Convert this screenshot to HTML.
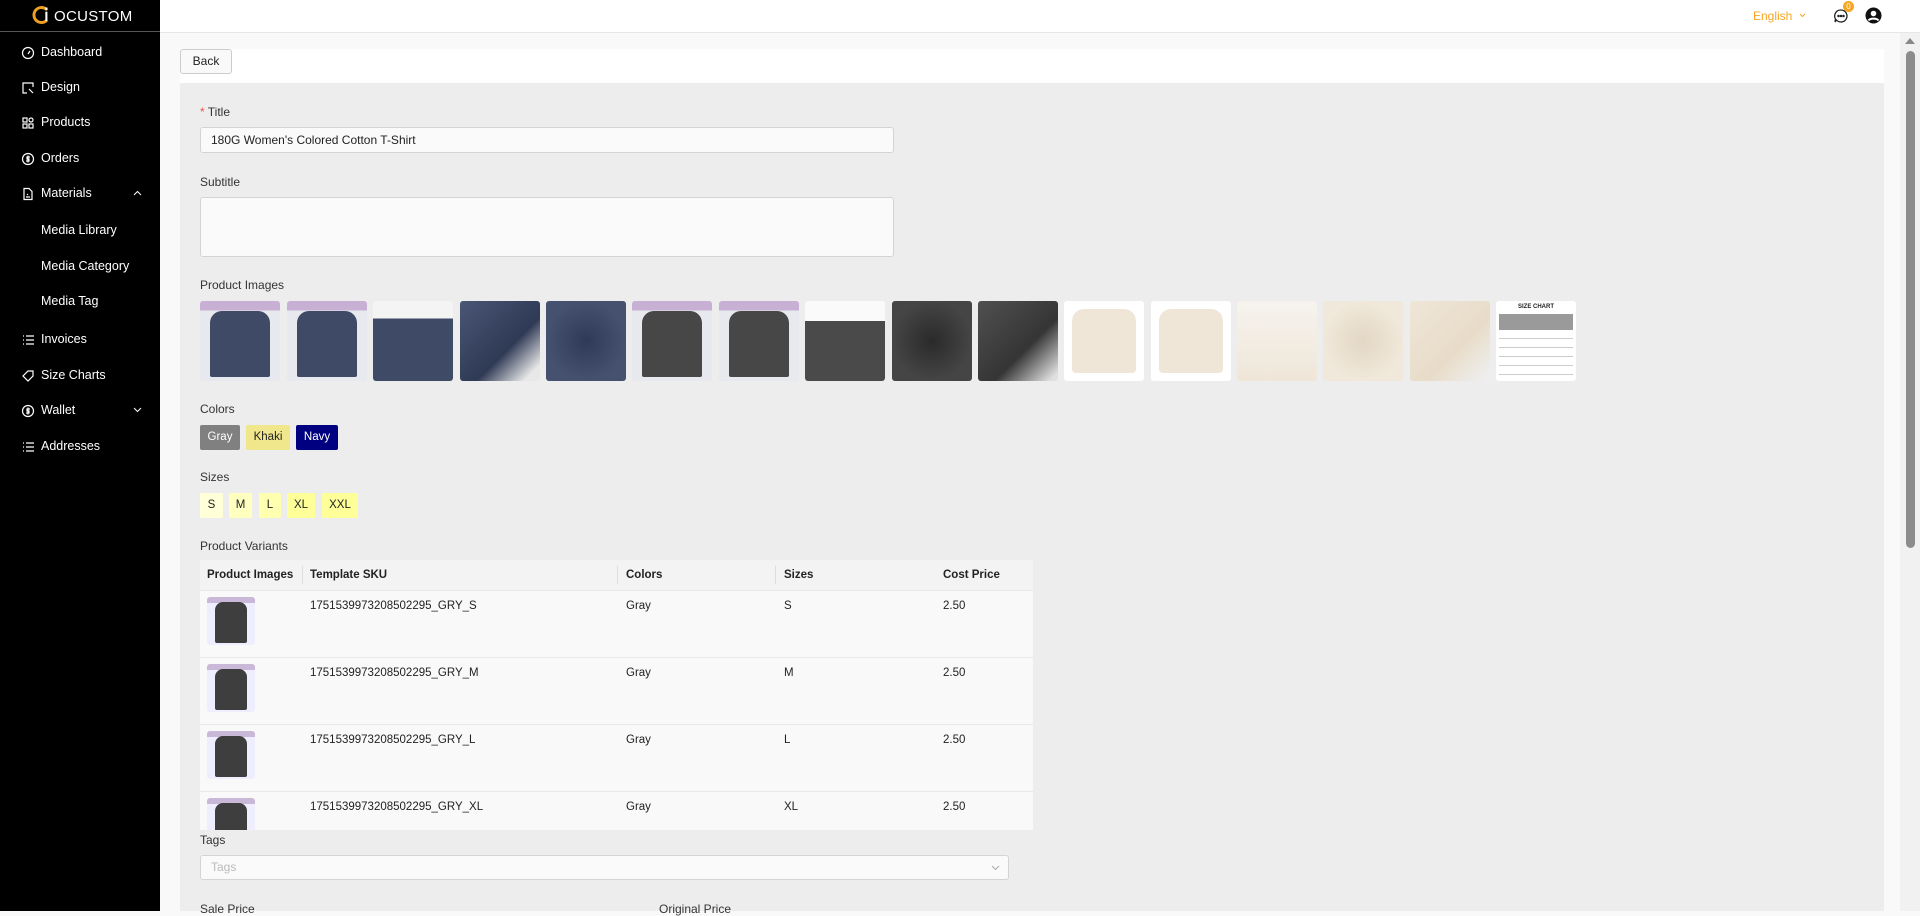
<!DOCTYPE html>
<html><head><meta charset="utf-8"><style>
*{box-sizing:border-box;margin:0;padding:0}
body{width:1920px;height:911px;overflow:hidden;background:#f9f9f9;font-family:"Liberation Sans",sans-serif;font-size:12px;color:#222;position:relative}
.abs{position:absolute}
#side{left:0;top:0;width:160px;height:911px;background:#000;color:#fff}
#side .logo{left:0;top:0;width:160px;height:32px;border-bottom:1px solid #555}
.nav{position:absolute;left:0;font-size:12.5px;color:#fff;display:flex;align-items:center}
.nav svg{position:absolute;left:21px;top:-6px}
.nav span{position:absolute;left:41px;top:-7px;white-space:nowrap}
#top{left:160px;top:0;width:1760px;height:33px;background:#fff;border-bottom:1px solid #e6e6e6}
.lbl{position:absolute;left:200px;font-size:12px;color:#333}
.img{position:absolute;top:301px;width:80px;height:80px;border-radius:3px;overflow:hidden}
.chip{position:absolute;height:25px;line-height:25px;text-align:center;border-radius:2px;font-size:11.5px}
.row{position:absolute;left:200px;width:833px;height:67px;background:#f9f9f9;border-top:1px solid #e8e8e8;font-size:11.5px}
.row div{position:absolute;top:9px}
.thumb{position:absolute;left:7px;top:6px;width:48px;height:48px;border-radius:3px;background:linear-gradient(#c9b8d8 0 12%,#eef 12%);overflow:hidden}
.thumb i{position:absolute;left:8px;top:5px;width:32px;height:41px;background:#3e3e3e;border-radius:8px 8px 2px 2px}
</style></head><body>
<div id="side" class="abs">
 <div class="logo abs">
  <svg class="abs" style="left:32px;top:5px" width="20" height="20" viewBox="0 0 24 24"><path d="M17 5 A9 9 0 1 0 17 19" stroke="#f0a020" stroke-width="3.5" fill="none" stroke-linecap="round"/><rect x="16" y="3" width="2.5" height="3" fill="#fff"/><rect x="16" y="8" width="2.5" height="11" fill="#fff"/></svg>
  <div class="abs" style="left:54px;top:8px;font-size:15px;color:#fff;letter-spacing:0.3px">OCUSTOM</div>
 </div>
 <div class="nav" style="top:52px"><svg width="14" height="14" viewBox="0 0 14 14" fill="none" stroke="#fff" stroke-width="1.2"><circle cx="7" cy="7" r="5.5"/><path d="M7 8 L9 5"/></svg><span>Dashboard</span></div>
 <div class="nav" style="top:87px"><svg width="14" height="14" viewBox="0 0 14 14" fill="none" stroke="#fff" stroke-width="1.2"><path d="M12 6V2H2v10h4"/><path d="M8 8l4 4"/></svg><span>Design</span></div>
 <div class="nav" style="top:122px"><svg width="14" height="14" viewBox="0 0 14 14" fill="none" stroke="#fff" stroke-width="1.2"><rect x="2" y="2" width="4" height="4"/><circle cx="10" cy="4" r="2"/><rect x="2" y="8" width="4" height="4"/><rect x="8" y="8" width="4" height="4"/></svg><span>Products</span></div>
 <div class="nav" style="top:158px"><svg width="14" height="14" viewBox="0 0 14 14" fill="none" stroke="#fff" stroke-width="1.2"><circle cx="7" cy="7" r="5.5"/><path d="M9 5H6v2h2v2H5M7 3.5v7"/></svg><span>Orders</span></div>
 <div class="nav" style="top:193px"><svg width="14" height="14" viewBox="0 0 14 14" fill="none" stroke="#fff" stroke-width="1.2"><path d="M3 1.5h5l3 3v8H3z"/><path d="M5 10h4M6 7l1 1"/></svg><span>Materials</span><svg style="left:133px;top:-3px" width="9" height="6" viewBox="0 0 9 6" fill="none" stroke="#fff"><path d="M1 5l3.5-3.5L8 5"/></svg></div>
 <div class="nav" style="top:230px"><span>Media Library</span></div>
 <div class="nav" style="top:266px"><span>Media Category</span></div>
 <div class="nav" style="top:301px"><span>Media Tag</span></div>
 <div class="nav" style="top:339px"><svg width="14" height="14" viewBox="0 0 14 14" fill="none" stroke="#fff" stroke-width="1.2"><path d="M2 3h1M5 3h8M2 7h1M5 7h8M2 11h1M5 11h8"/></svg><span>Invoices</span></div>
 <div class="nav" style="top:375px"><svg width="14" height="14" viewBox="0 0 14 14" fill="none" stroke="#fff" stroke-width="1.2"><path d="M7 2h5v5l-5 5-5-5z"/></svg><span>Size Charts</span></div>
 <div class="nav" style="top:410px"><svg width="14" height="14" viewBox="0 0 14 14" fill="none" stroke="#fff" stroke-width="1.2"><circle cx="7" cy="7" r="5.5"/><path d="M9 5H6v2h2v2H5M7 3.5v7"/></svg><span>Wallet</span><svg style="left:133px;top:-3px" width="9" height="6" viewBox="0 0 9 6" fill="none" stroke="#fff"><path d="M1 1l3.5 3.5L8 1"/></svg></div>
 <div class="nav" style="top:446px"><svg width="14" height="14" viewBox="0 0 14 14" fill="none" stroke="#fff" stroke-width="1.2"><path d="M2 3h1M5 3h8M2 7h1M5 7h8M2 11h1M5 11h8"/></svg><span>Addresses</span></div>
</div>
<div id="top" class="abs">
 <div class="abs" style="left:1593px;top:9px;color:#f5a623;font-size:12px">English</div>
 <svg class="abs" style="left:1639px;top:13px" width="7" height="5" viewBox="0 0 7 5" fill="none" stroke="#f5a623"><path d="M1 1l2.5 2.5L6 1"/></svg>
 <svg class="abs" style="left:1673px;top:8px" width="16" height="16" viewBox="0 0 16 16" fill="none" stroke="#222" stroke-width="1.3"><path d="M8 2a6 6 0 1 1-4.5 10L2 14l.5-3A6 6 0 0 1 8 2z"/><circle cx="5.5" cy="8" r=".6" fill="#222"/><circle cx="8" cy="8" r=".6" fill="#222"/><circle cx="10.5" cy="8" r=".6" fill="#222"/></svg>
 <div class="abs" style="left:1683px;top:1px;width:11px;height:11px;border-radius:50%;background:#f5a623;color:#fff;font-size:8px;text-align:center;line-height:11px">0</div>
 <svg class="abs" style="left:1705px;top:7px" width="17" height="17" viewBox="0 0 17 17"><circle cx="8.5" cy="8.5" r="8" fill="#111"/><circle cx="8.5" cy="6.5" r="2.8" fill="#fff"/><path d="M3.5 13.5c1.5-2.5 8.5-2.5 10 0" stroke="#fff" stroke-width="2" fill="none"/></svg>
</div>
<div class="abs" style="left:1900px;top:33px;width:20px;height:878px;background:#f1f1f1"></div>
<div class="abs" style="left:1905px;top:38px;width:0;height:0;border-left:5px solid transparent;border-right:5px solid transparent;border-bottom:6px solid #888"></div>
<div class="abs" style="left:1906px;top:51px;width:9px;height:497px;background:#8c8c8c;border-radius:5px"></div>
<div class="abs" style="left:180px;top:49px;width:1704px;height:34px;background:#fff"></div>
<div class="abs" style="left:180px;top:49px;width:52px;height:25px;border:1px solid #ccc;border-radius:3px;background:#f9f9f9;text-align:center;line-height:23px;font-size:12px">Back</div>
<div class="abs" style="left:180px;top:83px;width:1704px;height:828px;background:#ededed"></div>
<div class="lbl" style="top:105px"><span style="color:#e55">*</span> Title</div>
<div class="abs" style="left:200px;top:127px;width:694px;height:26px;border:1px solid #d4d4d4;border-radius:3px;background:#fafafa;padding-left:10px;line-height:24px;font-size:12px">180G Women's Colored Cotton T-Shirt</div>
<div class="lbl" style="top:175px">Subtitle</div>
<div class="abs" style="left:200px;top:197px;width:694px;height:60px;border:1px solid #d4d4d4;border-radius:3px;background:#fafafa"></div>
<div class="lbl" style="top:278px">Product Images</div>
<div class="img" style="left:200px;background:linear-gradient(#c7b0d3 0 12%,#e8e8ef 12%)"><div class="abs" style="left:10px;top:10px;width:60px;height:66px;background:#3f4a66;border-radius:12px 12px 2px 2px"></div></div>
<div class="img" style="left:287px;background:linear-gradient(#c7b0d3 0 12%,#e8e8ef 12%)"><div class="abs" style="left:10px;top:10px;width:60px;height:66px;background:#3f4a66;border-radius:12px 12px 2px 2px"></div></div>
<div class="img" style="left:373px;background:linear-gradient(#f4f4f4 0 22%,#3f4a66 22%)"></div>
<div class="img" style="left:460px;background:linear-gradient(135deg,#4a5675,#2f3a55 60%,#e8e8e8 90%)"></div>
<div class="img" style="left:546px;background:radial-gradient(circle,#2f3a58,#45516f 70%)"></div>
<div class="img" style="left:632px;background:linear-gradient(#c7b0d3 0 12%,#e8e8ef 12%)"><div class="abs" style="left:10px;top:10px;width:60px;height:66px;background:#474747;border-radius:12px 12px 2px 2px"></div></div>
<div class="img" style="left:719px;background:linear-gradient(#c7b0d3 0 12%,#e8e8ef 12%)"><div class="abs" style="left:10px;top:10px;width:60px;height:66px;background:#474747;border-radius:12px 12px 2px 2px"></div></div>
<div class="img" style="left:805px;background:linear-gradient(#fafafa 0 25%,#4a4a4a 25%)"></div>
<div class="img" style="left:892px;background:radial-gradient(circle,#2a2a2a,#454545 70%)"></div>
<div class="img" style="left:978px;background:linear-gradient(135deg,#505050,#353535 60%,#e0e0e0 95%)"></div>
<div class="img" style="left:1064px;background:#fff"><div class="abs" style="left:8px;top:8px;width:64px;height:64px;background:#efe6d8;border-radius:12px 12px 4px 4px"></div></div>
<div class="img" style="left:1151px;background:#fff"><div class="abs" style="left:8px;top:8px;width:64px;height:64px;background:#efe6d8;border-radius:12px 12px 4px 4px"></div></div>
<div class="img" style="left:1237px;background:linear-gradient(#f6f3ee,#efe6d8)"></div>
<div class="img" style="left:1323px;background:radial-gradient(circle,#e3d7c4,#f0e8da 70%)"></div>
<div class="img" style="left:1410px;background:linear-gradient(135deg,#efe6d8,#e8dcc8 60%,#eee 95%)"></div>
<div class="img" style="left:1496px;background:#fff"><div class="abs" style="left:0;top:3px;width:80px;text-align:center;font-size:6px;font-weight:bold">SIZE CHART</div><div class="abs" style="left:3px;top:13px;width:74px;height:16px;background:#9a9a9a"></div><div class="abs" style="left:3px;top:29px;width:74px;height:45px;background:repeating-linear-gradient(#fff 0 8px,#ccc 8px 9px)"></div></div>
<div class="lbl" style="top:402px">Colors</div>
<div class="chip" style="left:200px;top:425px;width:40px;background:#808080;color:#fff">Gray</div>
<div class="chip" style="left:246px;top:425px;width:44px;background:#f0e68c;color:#222">Khaki</div>
<div class="chip" style="left:296px;top:425px;width:42px;background:#000080;color:#fff">Navy</div>
<div class="lbl" style="top:470px">Sizes</div>
<div class="chip" style="left:200px;top:493px;width:23px;background:#ffffd8">S</div>
<div class="chip" style="left:229px;top:493px;width:23px;background:#ffffc0">M</div>
<div class="chip" style="left:259px;top:493px;width:22px;background:#ffffb0">L</div>
<div class="chip" style="left:287px;top:493px;width:28px;background:#ffff99">XL</div>
<div class="chip" style="left:322px;top:493px;width:36px;background:#ffff99">XXL</div>
<div class="lbl" style="top:539px">Product Variants</div>
<div class="abs" style="left:200px;top:560px;width:833px;height:270px;overflow:hidden">
 <div class="abs" style="left:0;top:0;width:833px;height:30px;background:#f3f3f3;font-weight:bold;font-size:11.5px">
  <div class="abs" style="left:7px;top:9px">Product Images</div>
  <div class="abs" style="left:102px;top:6px;width:1px;height:18px;background:#ddd"></div>
  <div class="abs" style="left:110px;top:9px">Template SKU</div>
  <div class="abs" style="left:417px;top:6px;width:1px;height:18px;background:#ddd"></div>
  <div class="abs" style="left:426px;top:9px">Colors</div>
  <div class="abs" style="left:575px;top:6px;width:1px;height:18px;background:#ddd"></div>
  <div class="abs" style="left:584px;top:9px">Sizes</div>
  <div class="abs" style="left:743px;top:9px">Cost Price</div>
 </div>
 <div class="row" style="left:0;top:30px"><span class="thumb"><i></i></span><div style="left:110px">1751539973208502295_GRY_S</div><div style="left:426px">Gray</div><div style="left:584px">S</div><div style="left:743px">2.50</div></div>
 <div class="row" style="left:0;top:97px"><span class="thumb"><i></i></span><div style="left:110px">1751539973208502295_GRY_M</div><div style="left:426px">Gray</div><div style="left:584px">M</div><div style="left:743px">2.50</div></div>
 <div class="row" style="left:0;top:164px"><span class="thumb"><i></i></span><div style="left:110px">1751539973208502295_GRY_L</div><div style="left:426px">Gray</div><div style="left:584px">L</div><div style="left:743px">2.50</div></div>
 <div class="row" style="left:0;top:231px"><span class="thumb"><i></i></span><div style="left:110px">1751539973208502295_GRY_XL</div><div style="left:426px">Gray</div><div style="left:584px">XL</div><div style="left:743px">2.50</div></div>
</div>
<div class="lbl" style="top:833px">Tags</div>
<div class="abs" style="left:200px;top:855px;width:809px;height:25px;border:1px solid #d4d4d4;border-radius:3px;background:#fafafa;padding-left:10px;line-height:23px;color:#bbb">Tags<svg class="abs" style="right:8px;top:9px" width="9" height="6" viewBox="0 0 9 6" fill="none" stroke="#aaa"><path d="M1 1l3.5 3.5L8 1"/></svg></div>
<div class="lbl" style="top:902px">Sale Price</div>
<div class="lbl" style="top:902px;left:659px">Original Price</div>
</body></html>
